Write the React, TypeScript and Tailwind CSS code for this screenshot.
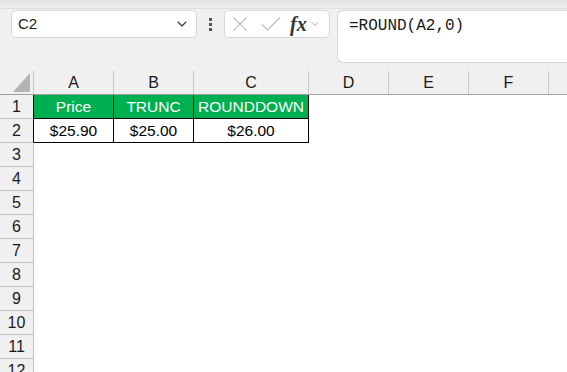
import { ChevronDown } from "lucide-react";

const cols = [
    { name: "A", w: "w-[80px]" },
    { name: "B", w: "w-[80px]" },
    { name: "C", w: "w-[115px]" },
    { name: "D", w: "w-[80px]" },
    { name: "E", w: "w-[80px]" },
    { name: "F", w: "w-[80px]" },
];

const data: Record<number, string[]> = {
    1: ["Price", "TRUNC", "ROUNDDOWN"],
    2: ["$25.90", "$25.00", "$26.00"],
};

function Toolbar() {
    return (
        <div className="h-[70px] bg-[#f0f0f0] relative">
            <div className="h-[9px] bg-gradient-to-b from-[#e4e4e4] to-[#eeeeee] border-b border-[#e0e0e0]" />
            <div className="flex items-start pl-[11px] pt-[1px]">
                <div className="w-[186px] h-[28px] bg-white border border-[#d6d6d6] rounded-[5px] flex items-center justify-between pl-[6px] pr-[6px]">
                    <span className="text-[15px] text-[#1a1a1a]">C2</span>
                    <ChevronDown size={16} strokeWidth={1.6} className="text-[#333]" />
                </div>
                <div className="w-[27px] h-[28px] flex flex-col items-center justify-center gap-[2px]">
                    <span className="w-[3px] h-[3px] bg-[#555]" />
                    <span className="w-[3px] h-[3px] bg-[#555]" />
                    <span className="w-[3px] h-[3px] bg-[#555]" />
                </div>
                <div className="w-[106px] h-[28px] bg-white border border-[#d6d6d6] rounded-[5px] flex items-center pl-[7px]">
                    <svg width="16" height="16" viewBox="0 0 16 16" className="mr-[13px]">
                        <path d="M1.5 1.5L14.5 14.5M14.5 1.5L1.5 14.5" stroke="#c3c3c3" strokeWidth="1.3" fill="none" />
                    </svg>
                    <svg width="20" height="16" viewBox="0 0 20 16" className="mr-[9px]">
                        <path d="M1 8.5L6.5 14L19 1.5" stroke="#c3c3c3" strokeWidth="1.3" fill="none" />
                    </svg>
                    <span className="text-[20px] italic font-semibold text-[#333] leading-none mr-[2px]" style={{ fontFamily: '"Liberation Serif", serif' }}>fx</span>
                    <ChevronDown size={12} strokeWidth={1.4} className="text-[#888]" />
                </div>
                <div className="ml-[7px] flex-1 h-[53px] bg-white border border-[#d6d6d6] border-r-0 rounded-l-[6px] pl-[11px] pt-[2px]">
                    <span className="text-[16px] text-[#1a1a1a]" style={{ fontFamily: '"Liberation Mono", monospace' }}>=ROUND(A2,0)</span>
                </div>
            </div>
        </div>
    );
}

function HeaderRow() {
    return (
        <div className="flex h-[25px] bg-[#f0f0f0] border-b border-[#a0a0a0]">
            <div className="w-[34px] border-r border-[#c8c8c8] flex items-end justify-end pr-[2px] pb-[2px] mt-[1px]">
                <svg width="18" height="19" viewBox="0 0 18 19">
                    <polygon points="17,0 17,19 0,19" fill="#b4b4b4" />
                </svg>
            </div>
            {cols.map((c) => (
                <div key={c.name} className={`${c.w} border-r border-[#c8c8c8] mt-[1px] flex items-center justify-center text-[16px] text-[#1a1a1a]`}>
                    {c.name}
                </div>
            ))}
            <div className="flex-1" />
        </div>
    );
}

function Row({ n }: { n: number }) {
    const vals = data[n];
    return (
        <div className="flex h-[24px]">
            <div className={`w-[34px] shrink-0 bg-[#f0f0f0] border-b border-[#c2c2c2] border-r ${vals ? "border-r-black" : "border-r-[#c2c2c2]"} flex items-center justify-center text-[16px] text-[#1a1a1a]`}>
                {n}
            </div>
            {cols.map((c, i) => {
                const v = vals ? vals[i] : undefined;
                if (v === undefined) return <div key={c.name} className={`${c.w} shrink-0`} />;
                const head = n === 1;
                return (
                    <div key={c.name} className={`${c.w} shrink-0 border-r border-b border-black flex items-center justify-center text-[15.5px] ${head ? "bg-[#00b050] text-white" : "bg-white text-black"}`}>
                        {v}
                    </div>
                );
            })}
        </div>
    );
}

export default function App() {
    return (
        <div className="w-[567px] h-[372px] overflow-hidden bg-white" style={{ fontFamily: '"Liberation Sans", Arial, sans-serif' }}>
            <Toolbar />
            <HeaderRow />
            {Array.from({ length: 12 }, (_, i) => (
                <Row key={i} n={i + 1} />
            ))}
        </div>
    );
}
